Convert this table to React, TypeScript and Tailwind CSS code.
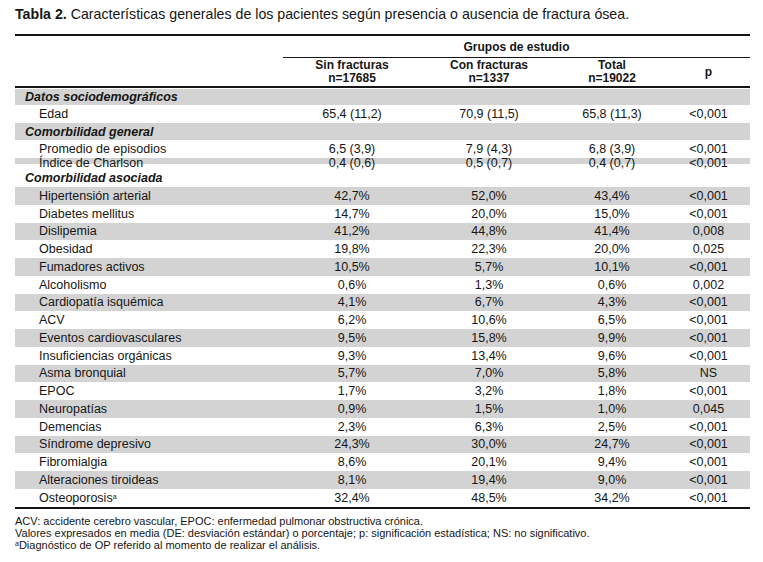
import React from "react";

type Row =
  | { kind: "section"; label: string; gray: boolean; cls: string }
  | { kind: "data"; label: string; values: string[]; gray: boolean; cls: string; sup?: boolean };

const top: Row[] = [
  { kind: "section", label: "Datos sociodemográficos", gray: true, cls: "h-[16px] items-center" },
  { kind: "data", label: "Edad", values: ["65,4 (11,2)", "70,9 (11,5)", "65,8 (11,3)", "<0,001"], gray: false, cls: "h-[18px] items-center" },
  { kind: "section", label: "Comorbilidad general", gray: true, cls: "h-[17px] items-center" },
  { kind: "data", label: "Promedio de episodios", values: ["6,5 (3,9)", "7,9 (4,3)", "6,8 (3,9)", "<0,001"], gray: false, cls: "h-[18px] items-center" },
  { kind: "data", label: "Índice de Charlson", values: ["0,4 (0,6)", "0,5 (0,7)", "0,4 (0,7)", "<0,001"], gray: true, cls: "h-[6px] items-start [&>div]:leading-[11px]" },
  { kind: "section", label: "Comorbilidad asociada", gray: false, cls: "h-[23px] items-start pt-[8px]" },
];

const comorb: [string, string, string, string, string][] = [
  ["Hipertensión arterial", "42,7%", "52,0%", "43,4%", "<0,001"],
  ["Diabetes mellitus", "14,7%", "20,0%", "15,0%", "<0,001"],
  ["Dislipemia", "41,2%", "44,8%", "41,4%", "0,008"],
  ["Obesidad", "19,8%", "22,3%", "20,0%", "0,025"],
  ["Fumadores activos", "10,5%", "5,7%", "10,1%", "<0,001"],
  ["Alcoholismo", "0,6%", "1,3%", "0,6%", "0,002"],
  ["Cardiopatía isquémica", "4,1%", "6,7%", "4,3%", "<0,001"],
  ["ACV", "6,2%", "10,6%", "6,5%", "<0,001"],
  ["Eventos cardiovasculares", "9,5%", "15,8%", "9,9%", "<0,001"],
  ["Insuficiencias orgánicas", "9,3%", "13,4%", "9,6%", "<0,001"],
  ["Asma bronquial", "5,7%", "7,0%", "5,8%", "NS"],
  ["EPOC", "1,7%", "3,2%", "1,8%", "<0,001"],
  ["Neuropatías", "0,9%", "1,5%", "1,0%", "0,045"],
  ["Demencias", "2,3%", "6,3%", "2,5%", "<0,001"],
  ["Síndrome depresivo", "24,3%", "30,0%", "24,7%", "<0,001"],
  ["Fibromialgia", "8,6%", "20,1%", "9,4%", "<0,001"],
  ["Alteraciones tiroideas", "8,1%", "19,4%", "9,0%", "<0,001"],
  ["Osteoporosis", "32,4%", "48,5%", "34,2%", "<0,001"],
];

const rows: Row[] = [
  ...top,
  ...comorb.map(([label, a, b, c, p], i) => ({
    kind: "data" as const,
    label,
    values: [a, b, c, p],
    gray: i % 2 === 0,
    cls: "h-[17.75px] items-center",
    sup: label === "Osteoporosis",
  })),
];

const grid = "grid grid-cols-[268px_138px_136px_110px_83px]";

export default function App() {
  return (
    <div className="h-[562px] w-[763px] bg-white px-[15px] pt-[6px] font-['Liberation_Sans',Arial,sans-serif] text-[#161616]">
      <p className="text-[14.2px] leading-[16px]">
        <span className="font-bold">Tabla 2.</span> Características generales de los pacientes según
        presencia o ausencia de fractura ósea.
      </p>

      <div className="mt-[12px] w-[735px] border-t-2 border-[#161616]">
        <div className={`${grid} h-[21px] items-center text-[12px] font-bold`}>
          <div />
          <div className="col-span-4 text-center">Grupos de estudio</div>
        </div>
        <div className={`${grid} h-[31px] items-center border-b-2 border-[#161616] text-[12px] font-bold leading-[13px]`}>
          <div />
          <div className="col-span-4 grid h-full grid-cols-[138px_136px_110px_83px] items-center border-t border-[#161616] text-center">
            <div>
              Sin fracturas
              <br />
              n=17685
            </div>
            <div>
              Con fracturas
              <br />
              n=1337
            </div>
            <div>
              Total
              <br />
              n=19022
            </div>
            <div>p</div>
          </div>
        </div>

        <div className="mt-px text-[12.5px] leading-[12px]">
          {rows.map((r) => (
            <div key={r.label} className={`${grid} ${r.cls} ${r.gray ? "bg-[#d3d3d3]" : ""}`}>
              {r.kind === "section" ? (
                <div className="col-span-5 pl-[10px] font-bold italic">{r.label}</div>
              ) : (
                <>
                  <div className="pl-[24px]">
                    {r.label}
                    {r.sup && <span className="align-top text-[7px] leading-[10px]">a</span>}
                  </div>
                  {r.values.map((v, i) => (
                    <div key={i} className="text-center">
                      {v}
                    </div>
                  ))}
                </>
              )}
            </div>
          ))}
        </div>

        <div className="border-t-2 border-[#161616] pt-[6px] text-[11px] leading-[12px]">
          <p>ACV: accidente cerebro vascular, EPOC: enfermedad pulmonar obstructiva crónica.</p>
          <p>
            Valores expresados en media (DE: desviación estándar) o porcentaje; p: significación estadística;
            NS: no significativo.
          </p>
          <p>
            <span className="align-top text-[7px] leading-[10px]">a</span>Diagnóstico de OP referido al momento de
            realizar el análisis.
          </p>
        </div>
      </div>
    </div>
  );
}
